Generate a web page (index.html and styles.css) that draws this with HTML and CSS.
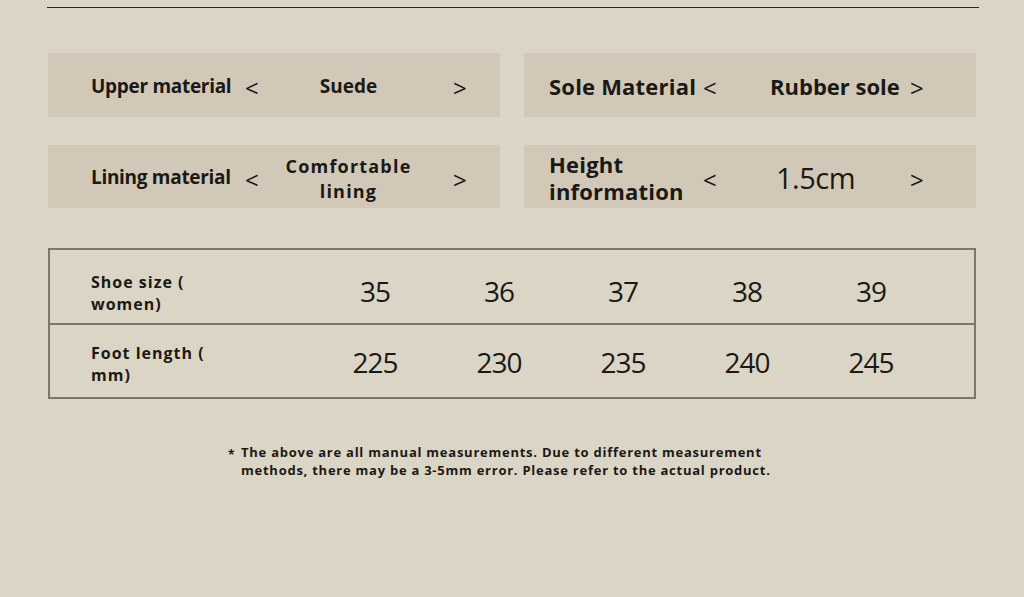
FILE: index.html
```html
<!DOCTYPE html>
<html lang="en">
<head>
<meta charset="utf-8">
<title>Product details</title>
<link rel="stylesheet" href="styles.css">
</head>
<body>
<div class="page">
  <div class="rule"></div>
  <div class="specs">
    <div class="spec spec-left">
      <div class="label">Upper material</div>
      <div class="arrow">&lt;</div>
      <div class="value">Suede</div>
      <div class="arrow">&gt;</div>
    </div>
    <div class="spec spec-right">
      <div class="label">Sole Material</div>
      <div class="arrow">&lt;</div>
      <div class="value">Rubber sole</div>
      <div class="arrow">&gt;</div>
    </div>
    <div class="spec spec-left">
      <div class="label">Lining material</div>
      <div class="arrow">&lt;</div>
      <div class="value spaced">Comfortable<br>lining</div>
      <div class="arrow">&gt;</div>
    </div>
    <div class="spec spec-right">
      <div class="label two-line">Height<br>information</div>
      <div class="arrow">&lt;</div>
      <div class="value light">1.5cm</div>
      <div class="arrow">&gt;</div>
    </div>
  </div>

  <div class="sizes">
    <div class="size-row">
      <div class="row-label">Shoe size (<br>women)</div>
      <div class="num">35</div>
      <div class="num">36</div>
      <div class="num">37</div>
      <div class="num">38</div>
      <div class="num">39</div>
    </div>
    <div class="size-row">
      <div class="row-label">Foot length (<br>mm)</div>
      <div class="num">225</div>
      <div class="num">230</div>
      <div class="num">235</div>
      <div class="num">240</div>
      <div class="num">245</div>
    </div>
  </div>

  <div class="note">
    <span class="star">*</span>
    <p>The above are all manual measurements. Due to different measurement<br>methods, there may be a 3-5mm error. Please refer to the actual product.</p>
  </div>
</div>
</body>
</html>
```

FILE: styles.css
```css
html, body {
  margin: 0;
  padding: 0;
  background: #dbd5c5;
}
body {
  font-family: "Open Sans", "Noto Sans", sans-serif;
  color: #1b1915;
  width: 1024px;
  height: 597px;
  overflow: hidden;
}
.page {
  padding: 7px 48px 0 48px;
}
.rule {
  height: 0;
  border-top: 1.5px solid #2b2822;
  margin: 0 -3px 0 -1px;
}
.specs {
  margin-top: 45px;
  display: grid;
  grid-template-columns: 452px 452px;
  column-gap: 24px;
  grid-template-rows: 64px 63px;
  row-gap: 28px;
}
.spec {
  background: #d1c8b7;
  display: grid;
  align-items: center;
}
.spec-left {
  padding-left: 43px;
  grid-template-columns: 154px 15px 193px 15px;
}
.spec-right {
  padding-left: 25px;
  grid-template-columns: 154px 15px 192px 15px;
}
.label {
  font-weight: 700;
  line-height: 25px;
}
.spec-left .label {
  font-size: 19px;
  letter-spacing: -0.3px;
  padding-top: 2px;
}
.spec-right .label {
  font-size: 22px;
  letter-spacing: 0.2px;
  line-height: 26px;
  padding-top: 2px;
}
.spec-right .label.two-line {
  line-height: 27px;
  padding-top: 3px;
}
.arrow {
  font-size: 24px;
  font-weight: 400;
  line-height: 24px;
  padding-top: 6px;
}
.value {
  font-weight: 700;
  line-height: 25px;
}
.spec-left .value {
  font-size: 19px;
  text-align: center;
  padding-right: 16px;
  padding-top: 2px;
}
.spec-left .value.spaced {
  letter-spacing: 1.2px;
  font-size: 18px;
  padding-top: 4px;
}
.spec-right .value {
  font-size: 22px;
  text-align: left;
  padding-left: 52px;
  padding-top: 2px;
}
.spec-right .value.light {
  font-weight: 400;
  font-size: 29px;
  letter-spacing: -0.5px;
  padding-left: 58px;
  padding-top: 2px;
}
.sizes {
  margin-top: 40px;
  border: 2px solid #7c7667;
}
.size-row {
  display: grid;
  grid-template-columns: 263px repeat(5, 124px) 1fr;
  align-items: center;
  height: 73px;
}
.size-row + .size-row {
  border-top: 2px solid #7c7667;
  height: 72px;
}
.row-label {
  padding-left: 41px;
  font-size: 16px;
  font-weight: 700;
  line-height: 22px;
  letter-spacing: 1px;
  padding-top: 12px;
}
.size-row + .size-row .row-label {
  padding-top: 6px;
}
.num {
  text-align: center;
  font-size: 28px;
  font-weight: 400;
  letter-spacing: -1px;
  padding-top: 8px;
}
.size-row + .size-row .num {
  padding-top: 2px;
}
.note {
  margin-top: 44px;
  display: flex;
  align-items: flex-start;
  padding-left: 180px;
}
.star {
  font-size: 12px;
  font-weight: 700;
  width: 13px;
  padding-top: 6px;
  line-height: 12px;
}
.note p {
  margin: 0;
  font-size: 13px;
  font-weight: 700;
  line-height: 18px;
  letter-spacing: 0.75px;
}
```
